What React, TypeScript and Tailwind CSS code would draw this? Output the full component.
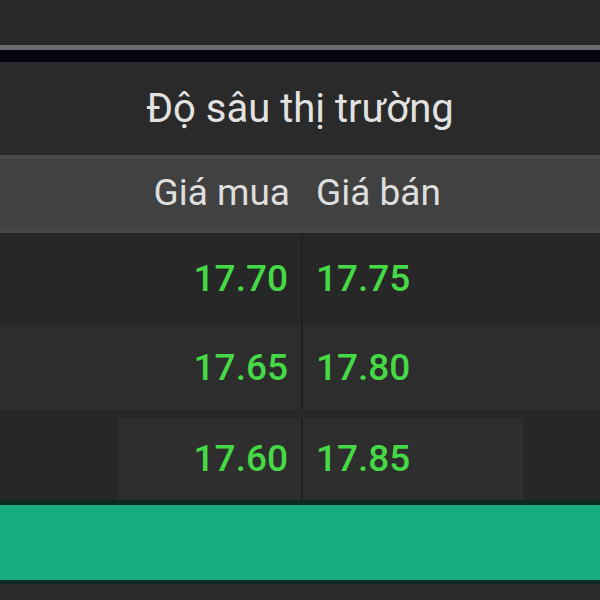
import React from "react";

export default function App() {
  const num = "flex items-center text-[37px] font-medium text-[#45d945]";
  return (
    <div
      className="w-[600px] h-[600px] overflow-hidden bg-[#2a2a2a] flex flex-col"
      style={{ fontFamily: "Roboto, 'Noto Sans', sans-serif" }}
    >
      <div className="h-[50px] shrink-0 bg-[#282828] border-b-[5px] border-[#6b6b6b]" />
      <div className="h-[12px] shrink-0 bg-[#05050f]" />
      <div className="h-[93px] shrink-0 bg-[#2a2a2a] flex items-center justify-center">
        <span className="text-[40px] text-[#e2e2e2] leading-none">Độ sâu thị trường</span>
      </div>
      <div className="h-[78px] shrink-0 bg-[#414141] border-t-[4px] border-[#4b4b4b] border-b-[6px] border-b-[#474747] flex">
        <div className="w-[303px] flex items-center justify-end pr-[13px] text-[37px] text-[#dedede]">Giá mua</div>
        <div className="flex-1 flex items-center pl-[13px] text-[37px] text-[#dedede]">Giá bán</div>
      </div>
      <div className="h-[92px] shrink-0 bg-[#272727] flex">
        <div className={`w-[303px] justify-end pr-[13px] border-r-2 border-[#1f1f1f] ${num}`}>17.70</div>
        <div className={`flex-1 pl-[13px] ${num}`}>17.75</div>
      </div>
      <div className="h-[85px] shrink-0 bg-[#2d2d2d] flex">
        <div className={`w-[303px] justify-end pr-[13px] border-r-2 border-[#1f1f1f] ${num}`}>17.65</div>
        <div className={`flex-1 pl-[13px] ${num}`}>17.80</div>
      </div>
      <div className="h-[90px] shrink-0 bg-[#272727] flex pt-[8px]">
        <div className="ml-[118px] w-[405px] bg-[#2e2e2e] flex">
          <div className={`w-[185px] justify-end pr-[13px] border-r-2 border-[#1f1f1f] ${num}`}>17.60</div>
          <div className={`flex-1 pl-[13px] ${num}`}>17.85</div>
        </div>
      </div>
      <div className="h-[84px] shrink-0 bg-[#17ab80] border-t-[5px] border-b-[4px] border-[#0d2a20]" />
      <div className="flex-1 bg-[#2a2a2a]" />
    </div>
  );
}
